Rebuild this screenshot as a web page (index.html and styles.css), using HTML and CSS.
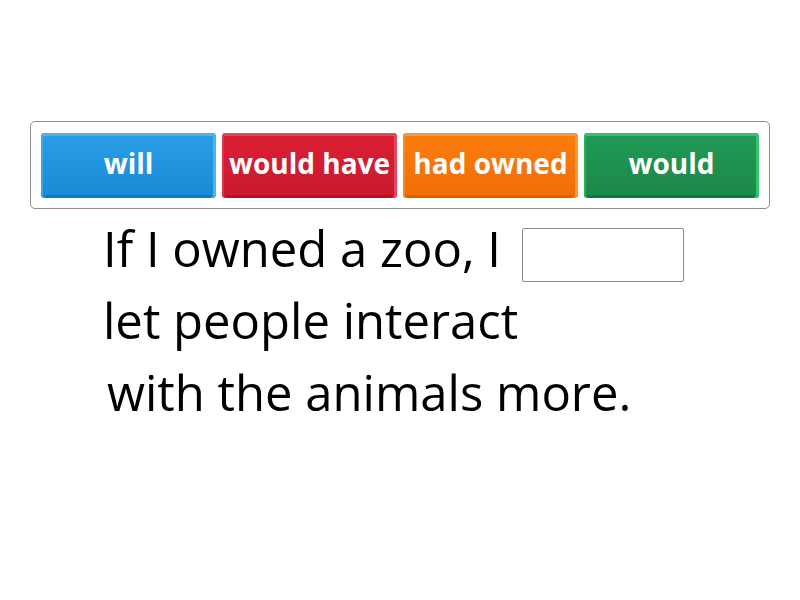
FILE: index.html
```html
<!DOCTYPE html>
<html>
<head>
<meta charset="utf-8">
<link rel="stylesheet" href="styles.css">
</head>
<body>
<div class="page">
  <div class="bank">
    <div class="tile blue">will</div>
    <div class="tile red">would have</div>
    <div class="tile orange">had owned</div>
    <div class="tile green">would</div>
  </div>
  <div class="sentence">
    <div class="line first"><span>If I owned a zoo, I</span><span class="blank"></span></div>
    <div class="line">let people interact</div>
    <div class="line third">with the animals more.</div>
  </div>
</div>
</body>
</html>
```
FILE: styles.css
```css
html, body {
  margin: 0;
  padding: 0;
  background: #ffffff;
}
.page {
  width: 800px;
  height: 600px;
  padding-top: 121px;
  box-sizing: border-box;
  font-family: "Open Sans", "Noto Sans", sans-serif;
}
.bank {
  margin-left: 30px;
  width: 740px;
  height: 88px;
  box-sizing: border-box;
  border: 1px solid #8f8f8f;
  border-radius: 5px;
  padding: 11px 10px 10px 10px;
  display: flex;
  gap: 6px;
}
.tile {
  width: 175px;
  height: 65px;
  box-sizing: border-box;
  border-radius: 4px;
  color: #ffffff;
  font-weight: 700;
  font-size: 28px;
  display: flex;
  align-items: center;
  justify-content: center;
  white-space: nowrap;
  padding-bottom: 6px;
}
.blue {
  background: linear-gradient(#2a9ee8, #1a8ad6);
  box-shadow: inset 0 3px 0 #4db2f0, inset -3px 0 0 #4db2f0, inset 2px 0 0 #3aa5ec, inset 0 -3px 0 #1478c2;
}
.red {
  background: linear-gradient(#db1f35, #c91a2e);
  box-shadow: inset 0 3px 0 #e4485a, inset -3px 0 0 #e4485a, inset 2px 0 0 #df3648, inset 0 -3px 0 #b0142a;
}
.orange {
  background: linear-gradient(#fb7c0e, #f06f06);
  box-shadow: inset 0 3px 0 #fd9535, inset -3px 0 0 #fd9535, inset 2px 0 0 #fc8a24, inset 0 -3px 0 #d96000;
}
.green {
  background: linear-gradient(#219a55, #1b8849);
  box-shadow: inset 0 3px 0 #33c46e, inset -3px 0 0 #33c46e, inset 2px 0 0 #2aaf61, inset 0 -3px 0 #16743d;
}
.sentence {
  margin-top: 3px;
  padding-left: 103px;
  font-size: 49px;
  line-height: 72px;
  color: #000000;
}
.line {
  height: 72px;
  white-space: nowrap;
}
.first {
  display: flex;
  align-items: flex-start;
}
.blank {
  display: block;
  width: 162px;
  height: 54px;
  box-sizing: border-box;
  border: 1px solid #8a8a8a;
  border-radius: 2px;
  margin-top: 16px;
  margin-left: 21px;
}
.third {
  padding-left: 4px;
}
```
